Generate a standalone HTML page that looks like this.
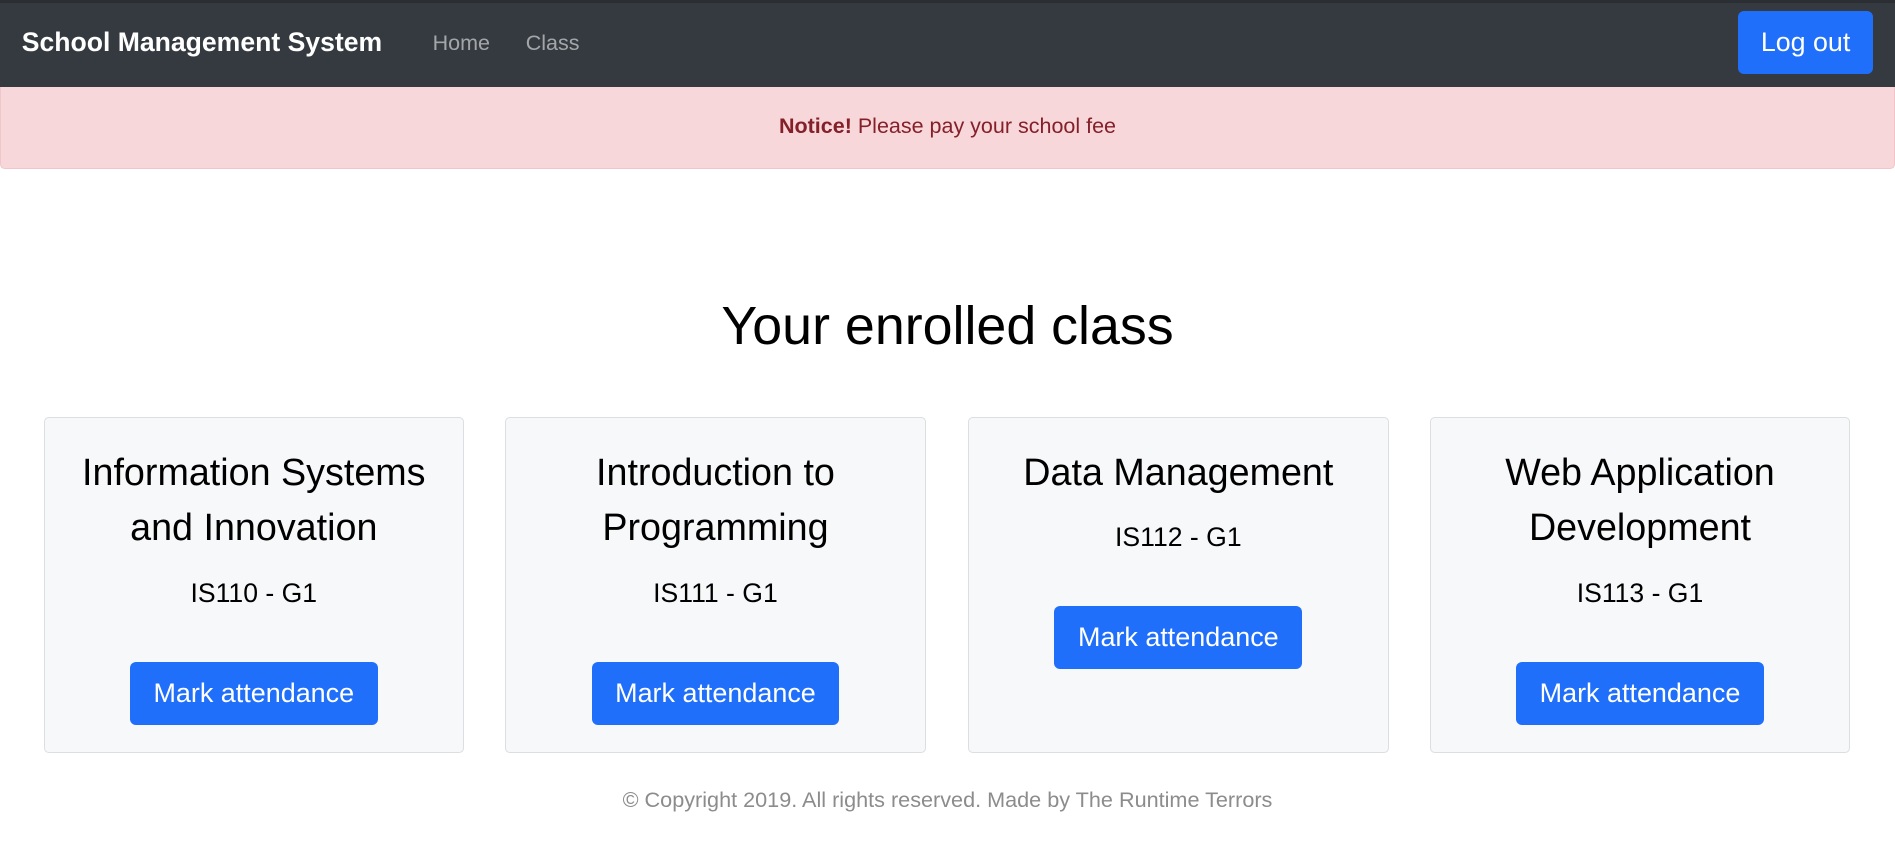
<!DOCTYPE html>
<html><head><meta charset="utf-8"><style>
html,body{margin:0;padding:0;}
body{width:1568px;height:710px;zoom:1.20855;font-family:"Liberation Sans",Arial,sans-serif;background:#fff;overflow:hidden;position:relative;}
.nav{position:absolute;left:0;top:0;width:1568px;height:72px;background:#343a40;border-top:3px solid #2b2f33;box-sizing:border-box;}
.brand{position:absolute;left:18px;top:20px;font-size:22px;font-weight:bold;color:#fff;line-height:26px;}
.nl{position:absolute;top:22px;font-size:17.8px;color:rgba(255,255,255,.55);line-height:22px;}
.logout{position:absolute;left:1438px;top:7px;width:112px;height:52px;background:#1f6ffb;color:#fff;border-radius:5px;font-size:22.2px;line-height:52px;text-align:center;}
.alert{position:absolute;left:0;top:72px;width:1568px;height:68px;box-sizing:border-box;background:#f8d7da;border:1px solid #f1c6ca;border-top:none;border-radius:0 0 4px 4px;color:#842029;font-size:17.8px;text-align:center;line-height:66px;}
h1{position:absolute;left:0;width:1568px;top:243px;margin:0;text-align:center;font-weight:normal;font-size:44.5px;line-height:54px;color:#000;}
.card{position:absolute;top:345px;width:348px;height:278px;box-sizing:border-box;background:#f7f8f9;border:1px solid #dcdfe2;border-radius:4px;text-align:center;padding-top:22px;}
.t{font-size:31.2px;line-height:46px;color:#000;}
.c{font-size:22px;line-height:30px;margin-top:16px;color:#000;}
.b{display:inline-block;margin-top:42px;width:205px;height:52px;line-height:52px;background:#1f6ffb;color:#fff;border-radius:5px;font-size:22.3px;}
.foot{position:absolute;left:0;width:1568px;top:651px;text-align:center;color:#8c8c8c;font-size:17.9px;line-height:22px;}
</style></head><body>
<div class="nav">
<div class="brand">School Management System</div>
<div class="nl" style="left:358px">Home</div>
<div class="nl" style="left:435px">Class</div>
<div class="logout">Log out</div>
</div>
<div class="alert"><b>Notice!</b> Please pay your school fee</div>
<h1>Your enrolled class</h1>
<div class="card" style="left:36px"><div class="t">Information Systems<br>and Innovation</div><div class="c">IS110 - G1</div><div class="b">Mark attendance</div></div>
<div class="card" style="left:418px"><div class="t">Introduction to<br>Programming</div><div class="c">IS111 - G1</div><div class="b">Mark attendance</div></div>
<div class="card" style="left:801px"><div class="t">Data Management</div><div class="c">IS112 - G1</div><div class="b">Mark attendance</div></div>
<div class="card" style="left:1183px"><div class="t">Web Application<br>Development</div><div class="c">IS113 - G1</div><div class="b">Mark attendance</div></div>
<div class="foot">© Copyright 2019. All rights reserved. Made by The Runtime Terrors</div>
</body></html>
